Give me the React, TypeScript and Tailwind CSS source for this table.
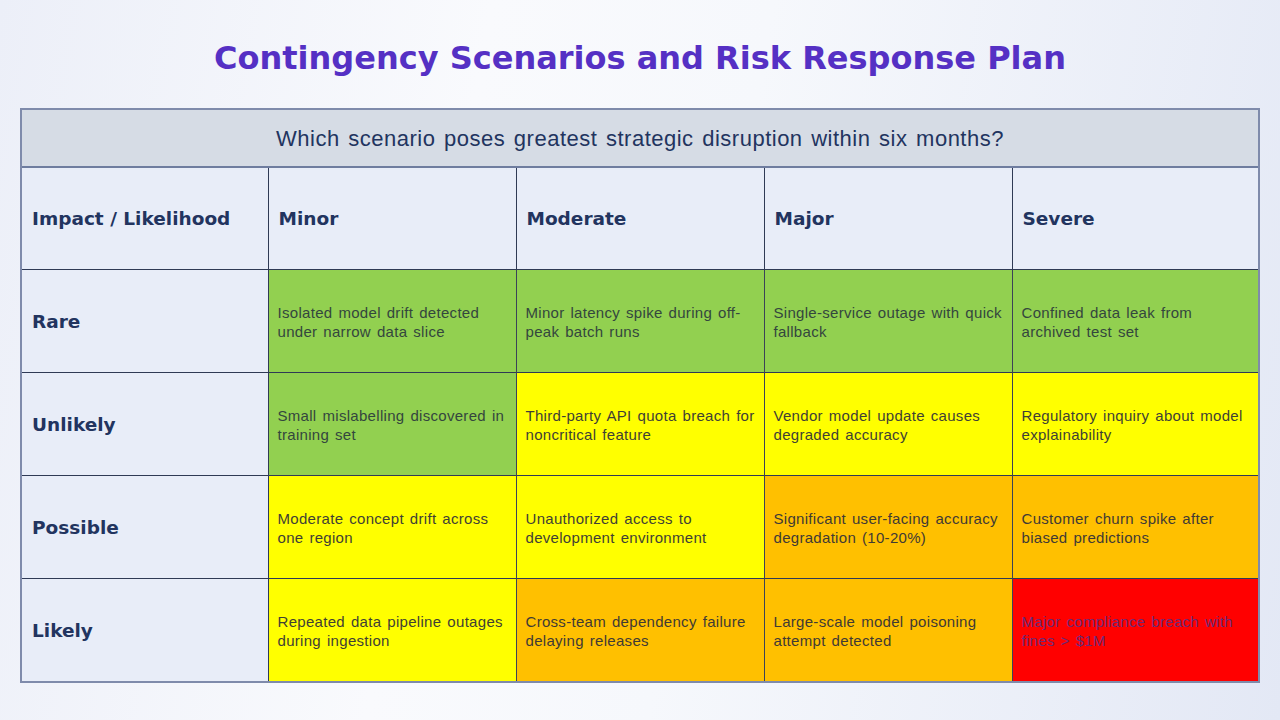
const columns = ["Minor", "Moderate", "Major", "Severe"];

type Cell = { text: string; tone: "green" | "yellow" | "orange" | "red" };

const rows: { label: string; cells: Cell[] }[] = [
  {
    label: "Rare",
    cells: [
      { text: "Isolated model drift detected under narrow data slice", tone: "green" },
      { text: "Minor latency spike during off-peak batch runs", tone: "green" },
      { text: "Single-service outage with quick fallback", tone: "green" },
      { text: "Confined data leak from archived test set", tone: "green" },
    ],
  },
  {
    label: "Unlikely",
    cells: [
      { text: "Small mislabelling discovered in training set", tone: "green" },
      { text: "Third-party API quota breach for noncritical feature", tone: "yellow" },
      { text: "Vendor model update causes degraded accuracy", tone: "yellow" },
      { text: "Regulatory inquiry about model explainability", tone: "yellow" },
    ],
  },
  {
    label: "Possible",
    cells: [
      { text: "Moderate concept drift across one region", tone: "yellow" },
      { text: "Unauthorized access to development environment", tone: "yellow" },
      { text: "Significant user-facing accuracy degradation (10-20%)", tone: "orange" },
      { text: "Customer churn spike after biased predictions", tone: "orange" },
    ],
  },
  {
    label: "Likely",
    cells: [
      { text: "Repeated data pipeline outages during ingestion", tone: "yellow" },
      { text: "Cross-team dependency failure delaying releases", tone: "orange" },
      { text: "Large-scale model poisoning attempt detected", tone: "orange" },
      { text: "Major compliance breach with fines > $1M", tone: "red" },
    ],
  },
];

const toneClass: Record<Cell["tone"], string> = {
  green: "bg-[#92d050] text-[#34463e]",
  yellow: "bg-[#ffff00] text-[#3f3f35]",
  orange: "bg-[#ffc000] text-[#3f3a35]",
  red: "bg-[#ff0000] text-[#6b2a78]",
};

const headFont = "font-['DejaVu_Sans',sans-serif] font-bold text-[#22345f] text-[18.5px]";
const bodyFont = "font-['Liberation_Sans',Arial,sans-serif]";

export default function App() {
  return (
    <div className="h-[720px] w-[1280px] overflow-hidden bg-[linear-gradient(100deg,#eceff8_0%,#f9fafd_35%,#f6f8fc_55%,#e3e8f5_100%)]">
      <h1 className="pt-[36px] pl-[214px] text-[32px] leading-[44px] font-bold text-[#5530c4] font-['DejaVu_Sans',sans-serif]">
        Contingency Scenarios and Risk Response Plan
      </h1>

      <div className="mt-[28px] ml-[20px] w-[1240px] border-2 border-[#7f8bab]">
        <table className="w-full table-fixed border-collapse">
          <colgroup>
            <col className="w-[246px]" />
            <col className="w-[248px]" />
            <col className="w-[248px]" />
            <col className="w-[248px]" />
            <col />
          </colgroup>
          <tbody>
            <tr className="h-[57px] border-b-2 border-[#6f7d9f] bg-[#d6dce5]">
              <td
                colSpan={5}
                className={`${bodyFont} text-center text-[22px] tracking-[0.5px] [word-spacing:2px] text-[#22345f]`}
              >
                Which scenario poses greatest strategic disruption within six months?
              </td>
            </tr>
            <tr className="h-[102px] bg-[#e8edf8]">
              <td className={`${headFont} border-r border-[#2f3a55] pl-[10px] pt-[2px]`}>
                Impact / Likelihood
              </td>
              {columns.map((c, i) => (
                <td
                  key={c}
                  className={`${headFont} ${i < 3 ? "border-r" : ""} border-[#2f3a55] pl-[10px] pt-[2px]`}
                >
                  {c}
                </td>
              ))}
            </tr>
            {rows.map((r) => (
              <tr key={r.label} className="h-[103px] border-t border-[#2f3a55]">
                <td className={`${headFont} border-r border-[#2f3a55] bg-[#e8edf8] pl-[10px] pt-[2px]`}>
                  {r.label}
                </td>
                {r.cells.map((cell, ci) => (
                  <td
                    key={ci}
                    className={`${bodyFont} ${toneClass[cell.tone]} ${ci < 3 ? "border-r" : ""} border-[#3b4258] pl-[9px] pr-[8px] pt-[2px] text-[15px] leading-[19px] tracking-[0.3px] [word-spacing:1.5px]`}
                  >
                    {cell.text}
                  </td>
                ))}
              </tr>
            ))}
          </tbody>
        </table>
      </div>
    </div>
  );
}
